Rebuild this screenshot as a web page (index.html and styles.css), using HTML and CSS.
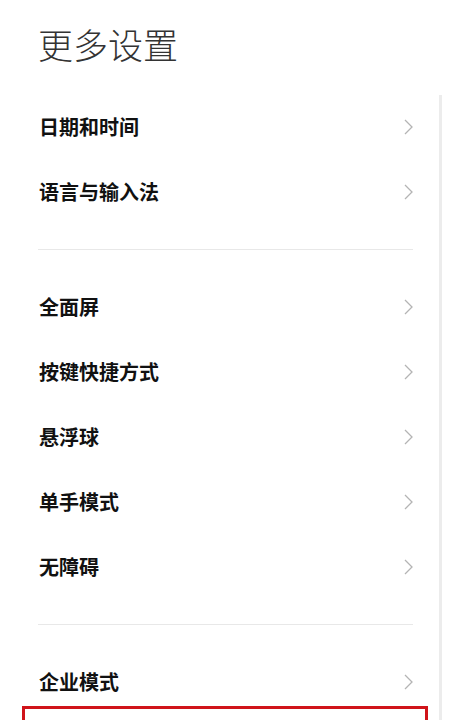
FILE: index.html
```html
<!DOCTYPE html>
<html lang="zh-CN">
<head>
<meta charset="utf-8">
<title>更多设置</title>
<link rel="stylesheet" href="styles.css">
</head>
<body>
<div class="page">
  <h1 class="title">更多设置</h1>
  <div class="scrollbar"></div>
  <ul class="group">
    <li class="row"><span class="label">日期和时间</span><svg class="chev" viewBox="0 0 9 16" width="9" height="16"><polyline points="1,1 8,8 1,15"/></svg></li>
    <li class="row"><span class="label">语言与输入法</span><svg class="chev" viewBox="0 0 9 16" width="9" height="16"><polyline points="1,1 8,8 1,15"/></svg></li>
  </ul>
  <div class="divider"></div>
  <ul class="group">
    <li class="row"><span class="label">全面屏</span><svg class="chev" viewBox="0 0 9 16" width="9" height="16"><polyline points="1,1 8,8 1,15"/></svg></li>
    <li class="row"><span class="label">按键快捷方式</span><svg class="chev" viewBox="0 0 9 16" width="9" height="16"><polyline points="1,1 8,8 1,15"/></svg></li>
    <li class="row"><span class="label">悬浮球</span><svg class="chev" viewBox="0 0 9 16" width="9" height="16"><polyline points="1,1 8,8 1,15"/></svg></li>
    <li class="row"><span class="label">单手模式</span><svg class="chev" viewBox="0 0 9 16" width="9" height="16"><polyline points="1,1 8,8 1,15"/></svg></li>
    <li class="row"><span class="label">无障碍</span><svg class="chev" viewBox="0 0 9 16" width="9" height="16"><polyline points="1,1 8,8 1,15"/></svg></li>
  </ul>
  <div class="divider"></div>
  <ul class="group">
    <li class="row"><span class="label">企业模式</span><svg class="chev" viewBox="0 0 9 16" width="9" height="16"><polyline points="1,1 8,8 1,15"/></svg></li>
  </ul>
  <div class="highlight"></div>
</div>
</body>
</html>
```
FILE: styles.css
```css
html, body {
  margin: 0;
  padding: 0;
  background: #ffffff;
}
body {
  font-family: "Noto Sans CJK SC", "Noto Sans", sans-serif;
  color: #111111;
}
.page {
  position: relative;
  width: 471px;
  height: 720px;
  overflow: hidden;
}
.title {
  margin: 0;
  padding: 26px 0 0 38px;
  font-size: 35px;
  line-height: 36px;
  font-weight: 300;
  color: #333333;
  height: 36px;
  margin-bottom: 32px;
}
.scrollbar {
  position: absolute;
  left: 439px;
  top: 95px;
  width: 3px;
  height: 640px;
  background: #ececec;
}
.group {
  list-style: none;
  margin: 0;
  padding: 0 58px 0 39px;
}
.row {
  height: 65px;
  display: flex;
  align-items: center;
  justify-content: space-between;
}
.label {
  font-size: 20px;
  line-height: 20px;
  font-weight: 700;
  color: #111111;
}
.chev {
  display: block;
}
.chev polyline {
  fill: none;
  stroke: #b4b4b4;
  stroke-width: 1.3;
}
.divider {
  margin: 25px 58px 24px 38px;
  height: 1px;
  background: #e8e8e8;
}
.highlight {
  margin: -8px 43px 0 22px;
  height: 80px;
  border: 3px solid #d0141a;
}
```
